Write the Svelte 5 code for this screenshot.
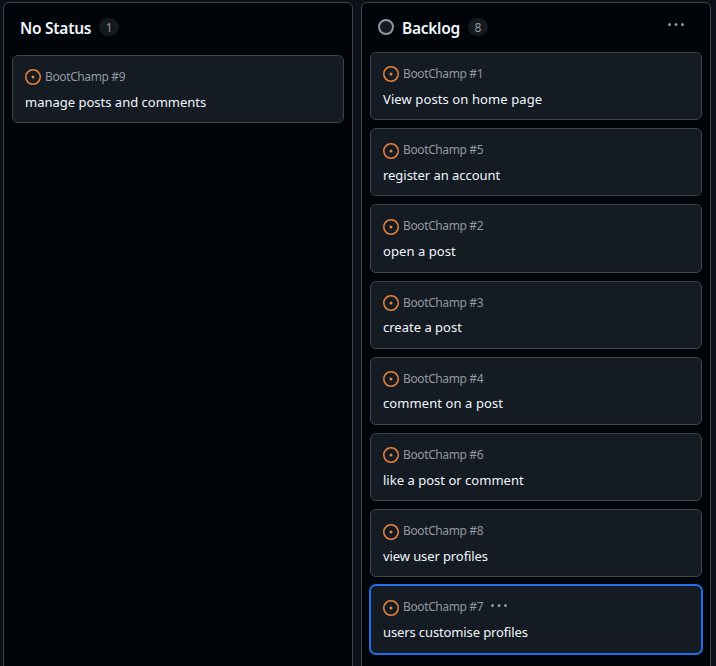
<script>
  const columns = [
    { name: 'No Status', count: 1, cards: [{ id: 9, title: 'manage posts and comments', track: 0 }] },
    {
      name: 'Backlog',
      count: 8,
      dot: true,
      cards: [
        { id: 1, title: 'View posts on home page', track: 0.1 },
        { id: 5, title: 'register an account', track: -0.04 },
        { id: 2, title: 'open a post', track: 0.07 },
        { id: 3, title: 'create a post', track: 0 },
        { id: 4, title: 'comment on a post', track: 0.09 },
        { id: 6, title: 'like a post or comment', track: 0.02 },
        { id: 8, title: 'view user profiles', track: -0.1 },
        { id: 7, title: 'users customise profiles', track: -0.12, selected: true }
      ]
    }
  ];
</script>

{#snippet dots()}
  <svg class="dots" width="18" height="4" viewBox="0 0 18 4">
    <circle cx="2.5" cy="1.5" r="1.5" /><circle cx="9" cy="1.5" r="1.5" /><circle cx="15.5" cy="1.5" r="1.5" />
  </svg>
{/snippet}

<main class="board">
  {#each columns as col}
    <section class="column">
      <header class:tall={!col.dot}>
        {#if col.dot}
          <svg class="status" width="16" height="16" viewBox="0 0 16 16">
            <circle cx="8" cy="8" r="7" />
          </svg>
        {/if}
        <h2>{col.name}</h2>
        <span class="count">{col.count}</span>
        {#if col.dot}<button class="menu" aria-label="Column menu">{@render dots()}</button>{/if}
      </header>
      <div class="cards">
        {#each col.cards as card}
          <article class="card" class:selected={card.selected}>
            <div class="meta">
              <svg class="issue" width="16" height="16" viewBox="0 0 16 16">
                <circle class="ring" cx="8" cy="8" r="7.25" />
                <circle class="core" cx="8" cy="8" r="1.5" />
              </svg>
              <span class="repo">BootChamp #{card.id}</span>
              {#if card.selected}{@render dots()}{/if}
            </div>
            <div class="title" style="letter-spacing: {card.track}px">{card.title}</div>
          </article>
        {/each}
      </div>
    </section>
  {/each}
</main>

<style>
  :global(body) {
    background: #0d1117;
    overflow: hidden;
  }
  .board {
    box-sizing: border-box;
    display: flex;
    gap: 8px;
    height: 666px;
    padding: 2px 5px 0 3px;
    overflow: hidden;
    font-family: 'Noto Sans', sans-serif;
    color: #f0f6fc;
  }
  .column {
    box-sizing: border-box;
    width: 350px;
    height: 700px;
    flex: none;
    background: #010409;
    border: 1px solid #3d444d;
    border-radius: 6px;
  }
  header {
    box-sizing: border-box;
    display: flex;
    align-items: flex-start;
    height: 49.1px;
    padding: 15px 16px 0;
  }
  header.tall {
    height: 52px;
  }
  .status {
    margin: 1px 8px 0 0;
  }
  .status circle {
    fill: #151b23;
    stroke: #9198a1;
    stroke-width: 2;
  }
  h2 {
    margin: 0;
    font-size: 15.5px;
    line-height: 21px;
    font-weight: 600;
    letter-spacing: -0.27px;
  }
  .count {
    width: 20px;
    height: 18px;
    margin-left: 8px;
    border-radius: 9px;
    background: #151a20;
    color: #9198a1;
    font-size: 12px;
    line-height: 19px;
    text-align: center;
  }
  .menu {
    display: flex;
    margin: 5px 9px 0 auto;
    padding: 0;
    border: 0;
    background: none;
  }
  .dots circle {
    fill: #9198a1;
  }
  .cards {
    display: flex;
    flex-direction: column;
    gap: 8px;
    padding: 0 8px;
  }
  .card {
    box-sizing: border-box;
    height: 68.19px;
    flex: none;
    padding: 12px;
    background: #151b23;
    border: 1px solid #3d444d;
    border-radius: 6px;
  }
  .card.selected {
    border-color: #1f6feb;
    box-shadow: 0 0 0 1px #1f6feb;
  }
  .meta {
    display: flex;
    align-items: flex-start;
    height: 18px;
    color: #9198a1;
    font-size: 12px;
    line-height: 18px;
  }
  .issue {
    margin: 1.33px 4px 0 0;
  }
  .ring {
    fill: none;
    stroke: #e8853d;
    stroke-width: 1.5;
  }
  .core {
    fill: #e8853d;
  }
  .repo {
    width: 80px;
    margin-right: 7px;
    letter-spacing: -0.38px;
    white-space: nowrap;
  }
  .meta .dots {
    margin-top: 5.7px;
  }
  .title {
    margin-top: 5.58px;
    font-size: 13px;
    line-height: 20px;
    white-space: nowrap;
  }
</style>
